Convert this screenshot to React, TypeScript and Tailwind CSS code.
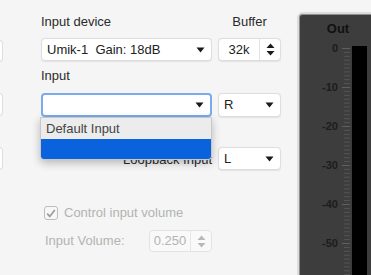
import React from 'react';

const font = { fontFamily: '"Liberation Sans", Arial, sans-serif' };

function Caret() {
  return (
    <svg width="9" height="6" viewBox="0 0 9 6" className="shrink-0">
      <path d="M0.5 0.5 L8.5 0.5 L4.5 5.5 Z" fill="#1a1a1a" />
    </svg>
  );
}

function Stepper({ color = '#1a1a1a' }: { color?: string }) {
  return (
    <svg width="9" height="13" viewBox="0 0 9 13">
      <path d="M0.5 5 L8.5 5 L4.5 0.5 Z" fill={color} />
      <path d="M0.5 8 L8.5 8 L4.5 12.5 Z" fill={color} />
    </svg>
  );
}

function Select({ label, focus }: { label: string; focus?: boolean }) {
  return (
    <div
      className={
        'flex items-center justify-between h-full bg-white rounded-[4px] pl-[5px] pr-[6px] ' +
        (focus
          ? 'border-2 border-[#7aabee]'
          : 'border border-[#dedede] shadow-[0_0.5px_1px_rgba(0,0,0,0.08)]')
      }
    >
      <span className="whitespace-pre text-[13px] text-[#222]">{label}</span>
      <Caret />
    </div>
  );
}

// scale next to the output bar: 0 to -50 dB, minor ticks every 1/10 step
function MeterScale() {
  const labels = ['0', '-10', '-20', '-30', '-40', '-50'];
  const step = 39;
  const top = 12;
  const ticks = [];
  for (let i = 0; i < 62; i++) {
    const y = top + i * (step / 10) + 0.5;
    const major = i % 10 === 0;
    ticks.push(
      <line key={i} x1={major ? 40 : 42} x2={48} y1={y} y2={y} stroke={major ? '#606060' : '#555'} strokeWidth="1" />
    );
  }
  return (
    <svg width="50" height="250" viewBox="0 0 50 250" className="shrink-0">
      {ticks}
      {labels.map((l, i) => (
        <text
          key={l}
          x="36"
          y={top + i * step + 4}
          textAnchor="end"
          fontSize="11"
          fontWeight="bold"
          fill="#1c1c1c"
          fontFamily='"Liberation Sans", Arial, sans-serif'
        >
          {l}
        </text>
      ))}
    </svg>
  );
}

export default function App() {
  return (
    <div className="w-[371px] h-[275px] bg-[#f5f5f5] relative overflow-hidden flex" style={font}>
      {/* cut-off controls on the left */}
      <div className="w-[41px] shrink-0 pt-[40px] flex flex-col gap-[31px]">
        <div className="w-[4px] h-[22px] -ml-px bg-white border border-[#dedede] rounded-r-[4px]" />
        <div className="w-[4px] h-[23px] -ml-px bg-white border border-[#dedede] rounded-r-[4px]" />
        <div className="w-[4px] h-[23px] -ml-px bg-white border border-[#dedede] rounded-r-[4px]" />
      </div>

      {/* input settings */}
      <div className="w-[240px] shrink-0 pt-[14px] flex flex-col">
        <div className="flex h-[16px] leading-[16px] text-[13px] text-[#2a2a2a]">
          <span className="w-[177px]">Input device</span>
          <span className="w-[63px] text-center">Buffer</span>
        </div>

        <div className="flex gap-[6px] h-[23px] mt-[8px]">
          <div className="w-[171px]">
            <Select label="Umik-1  Gain: 18dB" />
          </div>
          <div className="w-[63px] flex items-center bg-white border border-[#dedede] rounded-[4px] shadow-[0_0.5px_1px_rgba(0,0,0,0.08)]">
            <span className="flex-1 text-center text-[13px] text-[#222]">32k</span>
            <div className="w-[21px] h-full border-l border-[#e2e2e2] flex items-center justify-center">
              <Stepper />
            </div>
          </div>
        </div>

        <div className="h-[16px] leading-[16px] text-[13px] text-[#2a2a2a] mt-[7px]">Input</div>

        <div className="flex gap-[6px] h-[24px] mt-[9px]">
          <div className="w-[171px]">
            <Select label="" focus />
          </div>
          <div className="w-[63px]">
            <Select label="R" />
          </div>
        </div>

        <div className="flex gap-[6px] h-[23px] mt-[30px]">
          <div className="w-[171px] flex items-center justify-end text-[13px] text-[#2a2a2a] pt-[3px]">
            Loopback Input
          </div>
          <div className="w-[63px]">
            <Select label="L" />
          </div>
        </div>

        <div className="flex items-center gap-[6px] mt-[35px] pl-[3px] h-[16px]">
          <div className="w-[14px] h-[14px] rounded-[3px] border border-[#bdbdbd] bg-[#f7f7f7] flex items-center justify-center">
            <svg width="10" height="9" viewBox="0 0 10 9">
              <path d="M1.2 4.6 L3.8 7.4 L8.8 1" fill="none" stroke="#9c9c9c" strokeWidth="1.7" />
            </svg>
          </div>
          <span className="text-[13px] text-[#b3b3b3]">Control input volume</span>
        </div>

        <div className="flex items-center h-[22px] mt-[9px] pl-[4px]">
          <span className="w-[104px] text-[13px] text-[#b3b3b3]">Input Volume:</span>
          <div className="w-[63px] h-full flex items-center bg-[#f9f9f9] border border-[#e3e3e3] rounded-[4px]">
            <span className="flex-1 text-center text-[13px] text-[#b3b3b3]">0.250</span>
            <div className="w-[21px] h-full border-l border-[#e6e6e6] flex items-center justify-center">
              <Stepper color="#b8b8b8" />
            </div>
          </div>
        </div>
      </div>

      {/* output meter */}
      <div className="ml-[16px] mt-[12px] w-[92px] h-[280px] shrink-0 rounded-tl-[6px] border-2 border-[#dcdcdc] shadow-[inset_0_0_0_1px_#8c8c8c] bg-[#3d3d3d] flex flex-col">
        <div className="h-[22px] flex items-end justify-center pr-[10px] text-[13px] leading-[15px] font-bold text-[#111]">Out</div>
        <div className="flex">
          <div className="w-[3px]" />
          <MeterScale />
          <div className="w-[15px] h-[240px] bg-black mt-[10px]" />
        </div>
      </div>

      {/* open dropdown list */}
      <div className="absolute left-[40px] top-[117px] w-[172px] bg-[#ececec] border border-[#c8c8c8] rounded-b-[4px] shadow-[0_3px_8px_rgba(0,0,0,0.25)] overflow-hidden">
        <div className="h-[21px] flex items-center pl-[5px] text-[13px] text-[#444]">Default Input</div>
        <div className="h-[20px] bg-[#0a63dd]" />
      </div>
    </div>
  );
}
